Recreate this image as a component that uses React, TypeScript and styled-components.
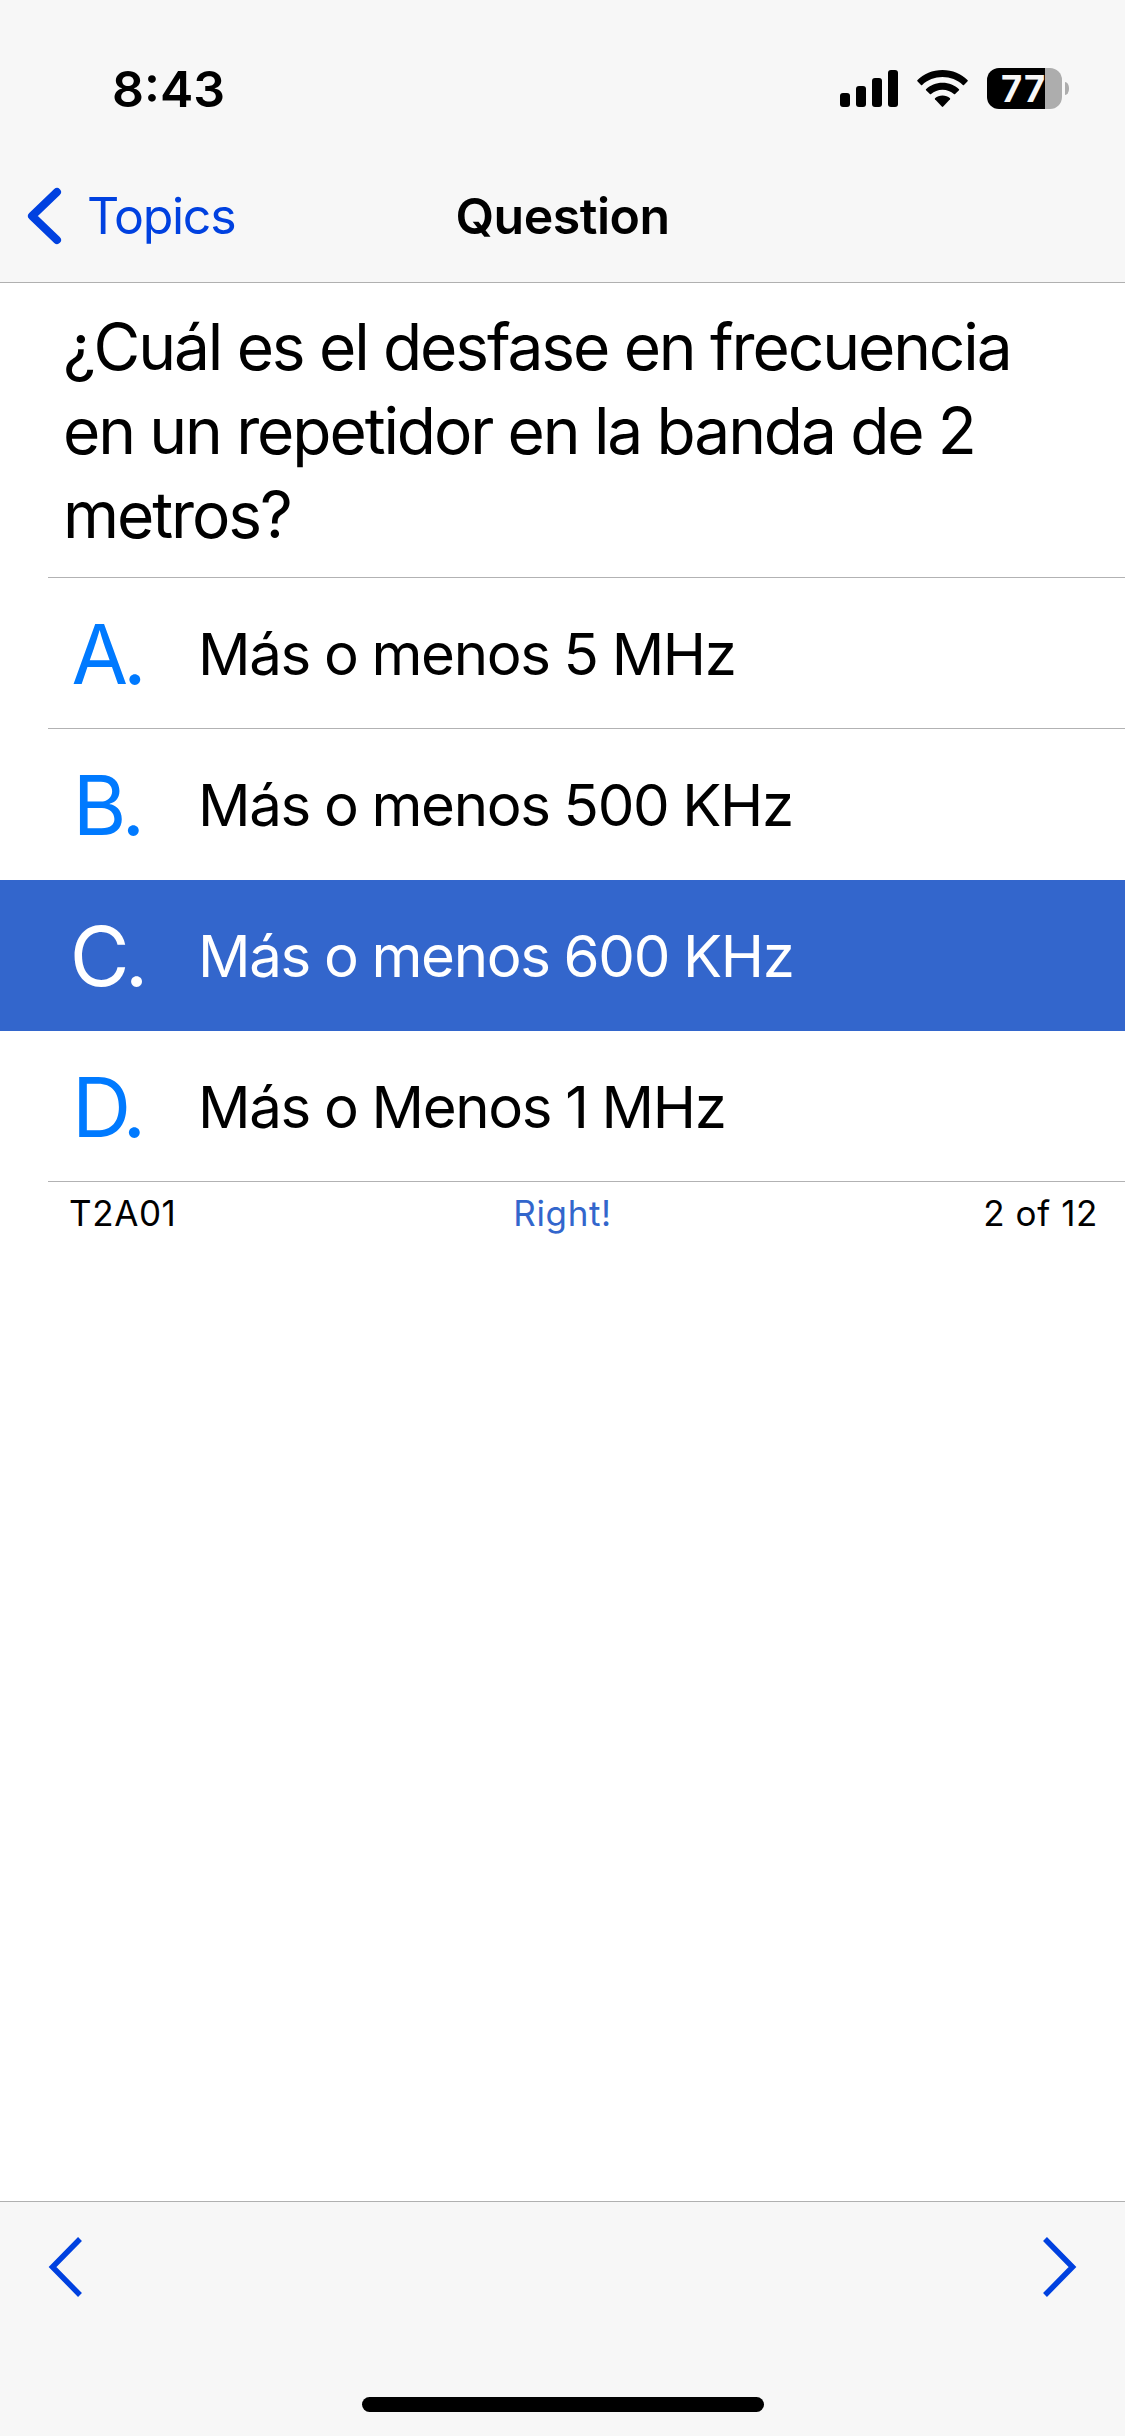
import React from 'react';
import styled, { createGlobalStyle } from 'styled-components';

const GlobalStyle = createGlobalStyle`
  * { box-sizing: border-box; }
  body {
    margin: 0;
    background: #fff;
    color: #000;
    font-family: Inter, "Liberation Sans", sans-serif;
  }
`;

const Screen = styled.div`
  display: flex;
  flex-direction: column;
  width: 1125px;
  height: 2436px;
  background: #fff;
  overflow: hidden;
`;

const Header = styled.header`
  height: 283px;
  background: #f7f7f7;
  border-bottom: 1px solid #b0b0b0;
`;

const StatusBar = styled.div`
  display: flex;
  justify-content: space-between;
  height: 150px;
  padding: 68px 56px 0 112px;
`;

const Clock = styled.time`
  font-size: 50px;
  line-height: 60px;
  margin-top: -9px;
  font-weight: 600;
`;

const StatusIcons = styled.div`
  display: flex;
  align-items: flex-start;
`;

const SignalBars = styled.div`
  display: flex;
  align-items: flex-end;
  gap: 6px;
  height: 37px;
  margin: 2px 19px 0 0;
`;

const SignalBar = styled.span<{ $height: number }>`
  width: 10px;
  height: ${({ $height }) => $height}px;
  border-radius: 3px;
  background: #000;
`;

const WifiIcon = styled.svg`
  width: 51px;
  height: 38px;
  margin: 2px 19px 0 0;
`;

const Battery = styled.div`
  display: flex;
  align-items: center;
  gap: 3px;
`;

const BatteryBody = styled.div`
  width: 75px;
  height: 41px;
  border-radius: 12px;
  background: linear-gradient(to right, #000 58px, #adadad 58px);
  color: #f7f7f7;
  font-size: 36.5px;
  font-weight: 650;
  line-height: 42px;
  letter-spacing: 1px;
  padding-left: 14px;
`;

const BatteryTip = styled.span`
  width: 4px;
  height: 13px;
  border-radius: 0 4px 4px 0 / 0 6px 6px 0;
  background: #adadad;
`;

const NavBar = styled.nav`
  display: grid;
  grid-template-columns: 1fr auto 1fr;
  align-items: center;
  height: 132px;
  font-size: 50px;
  line-height: 60px;
`;

const BackButton = styled.a`
  display: flex;
  align-items: center;
  gap: 25px;
  padding-left: 27px;
  color: #0041e0;
  letter-spacing: -1.3px;
`;

const BackIcon = styled.svg`
  width: 35px;
  height: 58px;
`;

const NavTitle = styled.h1`
  margin: 0;
  font-size: 50px;
  font-weight: 600;
  letter-spacing: -0.5px;
`;

const Main = styled.main`
  flex: 1;
`;

const Prompt = styled.h2`
  height: 295px;
  margin: 0 0 0 48px;
  padding: 22px 80px 0 15px;
  border-bottom: 1px solid #b2b2b3;
  font-size: 64px;
  font-weight: 400;
  line-height: 84px;
  letter-spacing: -2.1px;
  word-spacing: -0.5px;
`;

const AnswerRow = styled.div<{ $selected?: boolean }>`
  display: flex;
  height: 151px;
  padding-left: 48px;
  background: ${({ $selected }) => ($selected ? '#3366cc' : 'transparent')};
  color: ${({ $selected }) => ($selected ? '#fff' : '#000')};
`;

const AnswerBody = styled.div<{ $divided?: boolean }>`
  display: flex;
  align-items: center;
  flex: 1;
  padding-top: 1px;
  border-bottom: 1px solid ${({ $divided }) => ($divided ? '#b2b2b3' : 'transparent')};
`;

const AnswerLetter = styled.span<{ $selected?: boolean }>`
  width: 117px;
  margin-right: 33px;
  padding-top: 2px;
  font-size: 82px;
  line-height: 100px;
  letter-spacing: -5px;
  text-align: center;
  color: ${({ $selected }) => ($selected ? '#fff' : '#007aff')};
`;

const AnswerText = styled.span`
  font-size: 58.2px;
  line-height: 70px;
  letter-spacing: -1.35px;
  word-spacing: -1px;
`;

const Summary = styled.div`
  display: grid;
  grid-template-columns: 1fr auto 1fr;
  padding: 10px 27px 0;
  font-size: 35px;
  line-height: 42px;
  letter-spacing: 0.6px;
`;

const QuestionCode = styled.span`
  padding-left: 42px;
`;

const Result = styled.span`
  color: #3366cc;
`;

const Progress = styled.span`
  text-align: right;
`;

const Toolbar = styled.footer`
  display: flex;
  flex-direction: column;
  align-items: center;
  height: 235px;
  border-top: 1px solid #b0b0b0;
  background: #f7f7f7;
`;

const Pager = styled.div`
  display: flex;
  justify-content: space-between;
  width: 100%;
  padding: 33px 48px 0;
  margin-bottom: 98px;
`;

const PagerIcon = styled.svg`
  width: 35px;
  height: 64px;
`;

const HomeIndicator = styled.div`
  width: 402px;
  height: 15px;
  border-radius: 8px;
  background: #000;
`;

const answers = [
  { letter: 'A.', text: 'Más o menos 5 MHz', divided: true },
  { letter: 'B.', text: 'Más o menos 500 KHz' },
  { letter: 'C.', text: 'Más o menos 600 KHz', selected: true },
  { letter: 'D.', text: 'Más o Menos 1 MHz', divided: true },
];

export default function App() {
  return (
    <>
      <GlobalStyle />
      <Screen>
        <Header>
          <StatusBar>
            <Clock>8:43</Clock>
            <StatusIcons>
              <SignalBars>
                {[14, 21, 29, 37].map((h) => (
                  <SignalBar key={h} $height={h} />
                ))}
              </SignalBars>
              <WifiIcon viewBox="0 0 51 38">
                <path d="M25.5 0C35.5 0 44.5 3.9 50.7 10.2Q51 10.8 50.6 11.3L47 14.9Q46.4 15.4 45.8 14.9C40.4 9.8 33.3 7 25.5 7S10.6 9.8 5.2 14.9Q4.6 15.4 4 14.9L.4 11.3Q0 10.8 .3 10.2C6.5 3.9 15.5 0 25.5 0Z" />
                <path d="M25.5 12.7C32 12.7 37.8 15.1 42 19.2Q42.4 19.8 42 20.3L38.1 24.1Q37.5 24.6 36.9 24.1C33.9 21.4 29.9 19.7 25.5 19.7S17.1 21.4 14.1 24.1Q13.5 24.6 12.9 24.1L9 20.3Q8.6 19.8 9 19.2C13.2 15.1 19 12.7 25.5 12.7Z" />
                <path d="M25.5 25.4C28.4 25.4 31 26.4 33 28.2Q33.4 28.8 33 29.3L26.2 36.6Q25.5 37.2 24.8 36.6L18 29.3Q17.6 28.8 18 28.2C20 26.4 22.6 25.4 25.5 25.4Z" />
              </WifiIcon>
              <Battery>
                <BatteryBody>77</BatteryBody>
                <BatteryTip />
              </Battery>
            </StatusIcons>
          </StatusBar>
          <NavBar>
            <BackButton>
              <BackIcon viewBox="0 0 35 58" fill="none" stroke="currentColor" strokeWidth="8" strokeLinecap="round" strokeLinejoin="round">
                <path d="M30 5L5 29L30 53" />
              </BackIcon>
              Topics
            </BackButton>
            <NavTitle>Question</NavTitle>
          </NavBar>
        </Header>
        <Main>
          <Prompt>¿Cuál es el desfase en frecuencia en un repetidor en la banda de 2 metros?</Prompt>
          {answers.map((a) => (
            <AnswerRow key={a.letter} $selected={a.selected}>
              <AnswerBody $divided={a.divided}>
                <AnswerLetter $selected={a.selected}>{a.letter}</AnswerLetter>
                <AnswerText>{a.text}</AnswerText>
              </AnswerBody>
            </AnswerRow>
          ))}
          <Summary>
            <QuestionCode>T2A01</QuestionCode>
            <Result>Right!</Result>
            <Progress>2 of 12</Progress>
          </Summary>
        </Main>
        <Toolbar>
          <Pager>
            <PagerIcon viewBox="0 0 35 64" fill="none" stroke="#0041e0" strokeWidth="5.5">
              <path d="M32 4L4.5 32L32 60" />
            </PagerIcon>
            <PagerIcon viewBox="0 0 35 64" fill="none" stroke="#0041e0" strokeWidth="5.5">
              <path d="M3 4L30.5 32L3 60" />
            </PagerIcon>
          </Pager>
          <HomeIndicator />
        </Toolbar>
      </Screen>
    </>
  );
}
